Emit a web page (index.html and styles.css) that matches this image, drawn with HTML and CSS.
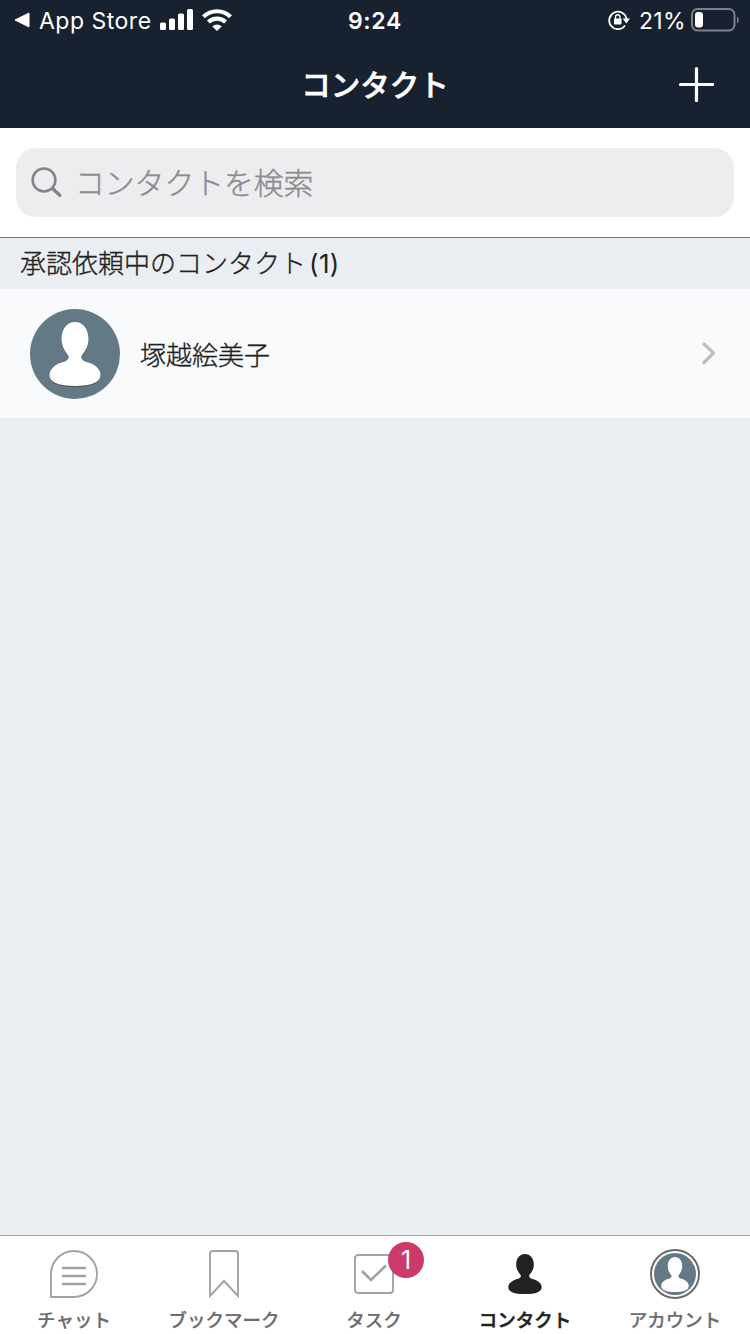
FILE: index.html
```html
<!DOCTYPE html>
<html lang="ja">
<head>
<meta charset="utf-8">
<title>コンタクト</title>
<link rel="stylesheet" href="styles.css">
</head>
<body>
<svg width="0" height="0" class="defs" aria-hidden="true">
  <symbol id="person" viewBox="0 0 52 64" preserveAspectRatio="none">
    <path d="M26 0C34 0 39.500 7 39.500 17C39.500 24 36 29.500 33.500 32.500C31.500 35 32 37.500 36 39.500C45 41.500 51.500 46.500 51.500 53C51.500 60.500 42 64 26 64S.5 60.500.5 53C.5 46.500 7 41.500 16 39.500C20 37.500 20.500 35 18.500 32.500C16 29.500 12.500 24 12.500 17C12.500 7 18 0 26 0Z"/>
  </symbol>
</svg>
<div class="app">
  <header class="header">
    <div class="status">
      <div class="status-left">
        <svg class="back" width="16" height="16" viewBox="0 0 16 16"><path d="M1 8L15 1V15Z" fill="#fff" stroke="#fff" stroke-linejoin="round"/></svg>
        <span class="carrier">App Store</span>
        <svg class="signal" width="33" height="22" viewBox="0 0 33 22" fill="#fff"><rect y="13.500" width="6" height="7.500" rx="1.500"/><rect x="9" y="9.500" width="6" height="11.500" rx="1.500"/><rect x="18" y="4.500" width="6" height="16.500" rx="1.500"/><rect x="27" y="0" width="6" height="21" rx="1.500"/></svg>
        <svg class="wifi" width="30" height="22" viewBox="0 0 30 22" fill="none" stroke="#fff" stroke-width="4.200"><path d="M1.500 7.800A19.200 19.200 0 0 1 28.500 7.800"/><path d="M6.400 13.100A12.200 12.200 0 0 1 23.600 13.100"/><path d="M15 22L10.300 17.500A6.700 6.700 0 0 1 19.700 17.500Z" fill="#fff" stroke="none"/></svg>
      </div>
      <div class="time">9:24</div>
      <div class="status-right">
        <svg class="lock" width="22" height="20" viewBox="0 0 22 20" fill="none" stroke="#fff"><path d="M17 15.500A8.700 8.700 0 1 1 18.500 9" stroke-width="1.800"/><path d="M14.700 8.500H22L18.300 13.500Z" fill="#fff" stroke="none"/><rect x="6" y="8.500" width="7.500" height="6" rx=".8" fill="#fff" stroke="none"/><path d="M7.500 9V7A2.200 2.200 0 0 1 12 7V9" stroke-width="1.300"/></svg>
        <span class="percent">21%</span>
        <svg class="battery" width="48" height="24" viewBox="0 0 48 24"><rect x="1" y="1" width="42.500" height="21.500" rx="5.500" fill="none" stroke="#7b818a" stroke-width="2"/><rect x="4" y="4" width="8" height="15.500" rx="3" fill="#fff"/><path d="M46 8.500C48.300 10 48.300 14 46 15.500Z" fill="#7b818a"/></svg>
      </div>
    </div>
    <div class="nav">
      <h1 class="title">コンタクト</h1>
      <svg class="add" width="36" height="36" viewBox="0 0 36 36"><path d="M18.500 2.500V34.500M2.500 18.500H34.500" stroke="#fff" stroke-width="3.200" stroke-linecap="round"/></svg>
    </div>
  </header>
  <div class="search-area">
    <div class="search">
      <svg width="32" height="32" viewBox="0 0 32 32" fill="none" stroke="#838387"><circle cx="13" cy="13" r="11.400" stroke-width="2.500"/><path d="M21.500 21.500L28.800 28.300" stroke-width="3.400" stroke-linecap="round"/></svg>
      <span class="placeholder">コンタクトを検索</span>
    </div>
  </div>
  <main class="content">
    <h2 class="section-title">承認依頼中のコンタクト<span class="count">(1)</span></h2>
    <div class="contact">
      <div class="avatar"><svg class="avatar-person" width="52" height="64"><use href="#person"/></svg></div>
      <span class="name">塚越絵美子</span>
      <svg class="chevron" width="16" height="26" viewBox="0 0 16 26"><path d="M3 3L12.500 12L3 21.500" fill="none" stroke="#bdbdbf" stroke-width="3.200" stroke-linecap="round" stroke-linejoin="round"/></svg>
    </div>
  </main>
  <nav class="tabs">
    <div class="tab"><div class="tab-icon"><svg width="50" height="50" viewBox="0 0 50 50" fill="none" stroke="#a2a2a2"><path d="M2 48V25A23 23 0 1 1 25 48Z" stroke-width="1.900"/><path d="M13 19H37M13 27H37M13 35H37" stroke-width="2.600"/></svg></div><span class="label">チャット</span></div>
    <div class="tab"><div class="tab-icon"><svg width="32" height="50" viewBox="0 0 32 50" fill="none" stroke="#a2a2a2" stroke-width="1.900"><path d="M2 47V5Q2 2 5 2H27Q30 2 30 5V47L16 32Z"/></svg></div><span class="label">ブックマーク</span></div>
    <div class="tab"><div class="tab-icon"><svg width="40" height="40" viewBox="0 0 40 40" fill="none" stroke="#a2a2a2"><rect x="1" y="1" width="38" height="38" rx="3" stroke-width="1.900"/><path d="M8 17L17 26L32 11.500" stroke-width="2.600"/></svg><span class="badge">1</span></div><span class="label">タスク</span></div>
    <div class="tab active"><div class="tab-icon"><svg class="person-tab" width="34" height="40"><use href="#person"/></svg></div><span class="label">コンタクト</span></div>
    <div class="tab"><div class="tab-icon"><div class="account"><svg width="28" height="35"><use href="#person"/></svg></div></div><span class="label">アカウント</span></div>
  </nav>
</div>
</body>
</html>
```
FILE: styles.css
```css
* { box-sizing: border-box; }
body { margin: 0; font-family: "Inter", "Noto Sans CJK JP", sans-serif; }
svg { display: block; flex: none; }
.defs { position: absolute; }
.app { width: 750px; height: 1334px; display: flex; flex-direction: column; background: #eaeef3; overflow: hidden; white-space: nowrap; }
.header { height: 128px; background: #18212f; color: #fff; flex: none; }
.status { height: 40px; display: grid; grid-template-columns: 1fr auto 1fr; align-items: center; line-height: 40px; font-size: 23px; }
.status-left { display: flex; align-items: center; padding-left: 14px; }
.carrier { margin-left: 9px; width: 112px; padding-top: 2px; line-height: 38px; letter-spacing: .5px; }
.signal { margin-left: 9px; }
.wifi { margin-left: 9px; }
.time { padding-top: 2px; line-height: 38px; font-weight: 600; letter-spacing: .7px; }
.status-right { display: flex; justify-content: flex-end; align-items: center; padding-right: 11px; }
.percent { margin-left: 9px; width: 48px; padding-top: 2px; line-height: 38px; letter-spacing: .3px; }
.battery { margin-left: 4px; }
.nav { height: 88px; display: grid; grid-template-columns: 1fr auto 1fr; align-items: center; }
.title { grid-column: 2; margin: 0; padding-top: 2px; font-size: 29.5px; line-height: 44px; font-weight: 500; -webkit-text-stroke: .6px #fff; }
.add { justify-self: end; margin-right: 36px; }
.search-area { height: 110px; padding: 20px 16px; background: #fff; border-bottom: 1px solid #77787e; flex: none; }
.search { height: 69px; padding-left: 15px; display: flex; align-items: center; border-radius: 20px; background: #ededef; }
.placeholder { margin-left: 12px; padding-bottom: 4px; font-size: 29.8px; font-weight: 300; color: #8c8c90; -webkit-text-stroke: .4px #8c8c90; }
.content { flex: 1; }
.section-title { height: 51px; margin: 0; padding-left: 20px; font-size: 26px; line-height: 51px; font-weight: 300; color: #222; -webkit-text-stroke: .35px #222; }
.count { margin-left: 3px; font-size: 26px; font-weight: 400; letter-spacing: .4px; -webkit-text-stroke: 0; }
.contact { height: 129px; padding: 0 33px 0 30px; display: flex; align-items: center; background: #f8fafc; }
.avatar { width: 90px; height: 90px; border-radius: 50%; background: #637986; display: grid; place-items: center; }
.avatar-person { fill: #fff; overflow: visible; filter: drop-shadow(0 1px 0 #44545f); }
.name { margin-left: 20px; padding-bottom: 1px; font-size: 26px; font-weight: 300; color: #222; -webkit-text-stroke: .35px #222; }
.chevron { margin-left: auto; }
.tabs { height: 99px; display: grid; grid-template-columns: 148px 152px 148px 154px 146px; border-top: 1px solid #a4a6aa; background: #fff; flex: none; }
.tab { display: flex; flex-direction: column; align-items: center; padding-top: 13px; }
.tab-icon { position: relative; height: 50px; display: grid; place-items: center; }
.label { margin-top: 7px; font-size: 18.5px; line-height: 28px; font-weight: 500; color: #6c6c6c; -webkit-text-stroke: .2px #6c6c6c; }
.active .label { color: #222; -webkit-text-stroke: .5px #222; }
.person-tab { fill: #222; }
.badge { position: absolute; left: 34px; top: -7px; width: 36px; height: 36px; border-radius: 50%; background: #cd3a69; color: #fff; font-size: 25px; line-height: 36px; text-align: center; }
.account { width: 50px; height: 50px; border: 2px solid #6a6a6a; border-radius: 50%; padding: 2px; background: #637986 content-box; display: grid; place-items: center; fill: #fff; }
```
